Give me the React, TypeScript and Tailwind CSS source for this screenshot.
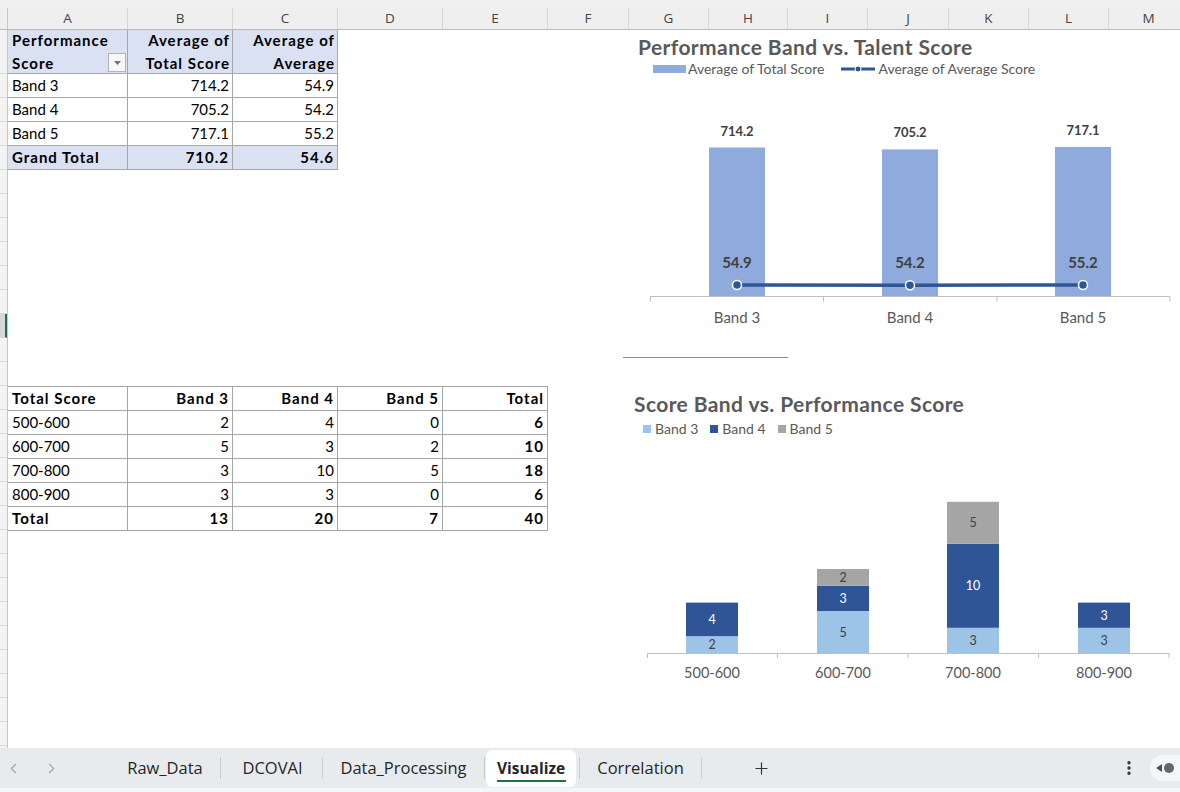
import { ChevronLeft, ChevronRight, Plus, EllipsisVertical } from "lucide-react";

const COLUMNS = [
  { l: "A", w: "w-[120px]" },
  { l: "B", w: "w-[105px]" },
  { l: "C", w: "w-[105px]" },
  { l: "D", w: "w-[105px]" },
  { l: "E", w: "w-[105px]" },
  { l: "F", w: "w-[81px]" },
  { l: "G", w: "w-[80px]" },
  { l: "H", w: "w-[79px]" },
  { l: "I", w: "w-[80px]" },
  { l: "J", w: "w-[81px]" },
  { l: "K", w: "w-[80px]" },
  { l: "L", w: "w-[80px]" },
  { l: "M", w: "w-[80px]" },
];

const PIVOT_ROWS = [
  ["Band 3", "714.2", "54.9"],
  ["Band 4", "705.2", "54.2"],
  ["Band 5", "717.1", "55.2"],
];

const COUNT_ROWS = [
  ["500-600", "2", "4", "0", "6"],
  ["600-700", "5", "3", "2", "10"],
  ["700-800", "3", "10", "5", "18"],
  ["800-900", "3", "3", "0", "6"],
];

// chart 1: avg total score bars + avg score line, same axis
const BAND_CHART = [
  { name: "Band 3", total: 714.2, avg: 54.9, x: 117 },
  { name: "Band 4", total: 705.2, avg: 54.2, x: 290 },
  { name: "Band 5", total: 717.1, avg: 55.2, x: 463 },
];
const K1 = 0.2086;
const AXIS1 = 196.5;

// chart 2: stacked counts
const STACKS = [
  { name: "500-600", x: 72, v: [2, 4, 0] },
  { name: "600-700", x: 203, v: [5, 3, 2] },
  { name: "700-800", x: 333, v: [3, 10, 5] },
  { name: "800-900", x: 464, v: [3, 3, 0] },
];
const K2 = 8.4;
const AXIS2 = 163;
const STACK_FILL = ["#9dc3e6", "#2f5597", "#a5a5a5"];
const STACK_TEXT = ["#404040", "#ffffff", "#404040"];

const ROW_LINES = Array.from({ length: 29 }, (_, i) => i);

function Cell({
  w,
  right,
  bold,
  children,
}: {
  w: string;
  right?: boolean;
  bold?: boolean;
  children: React.ReactNode;
}) {
  return (
    <div
      className={`${w} h-[24px] shrink-0 flex items-center border-r border-b border-[#a6a6a6] px-[4px] pr-[3px] ${
        right ? "justify-end" : ""
      } ${bold ? "font-bold tracking-[1px]" : ""}`}
    >
      {children}
    </div>
  );
}

function PivotTable() {
  return (
    <div className="flex flex-col text-[15px] text-black">
      <div className="flex bg-[#d9e1f2] font-bold tracking-[1px] leading-[23px]">
        <div className="relative w-[120px] h-[44px] flex flex-col justify-center border-r border-b border-[#a6a6a6] px-[4px]">
          <span>Performance</span>
          <span>Score</span>
          <div className="absolute right-[1px] top-[23px] w-[18px] h-[19px] bg-[#f7f7f7] border border-[#b4b4b4] flex items-center justify-center">
            <svg width="7" height="4" viewBox="0 0 7 4">
              <path d="M0 0 L7 0 L3.5 4 Z" fill="#707070" />
            </svg>
          </div>
        </div>
        <div className="w-[105px] h-[44px] flex flex-col justify-center items-end border-r border-b border-[#a6a6a6] pr-[2px]">
          <span>Average of</span>
          <span>Total Score</span>
        </div>
        <div className="w-[105px] h-[44px] flex flex-col justify-center items-end border-r border-b border-[#a6a6a6] pr-[2px]">
          <span>Average of</span>
          <span>Average</span>
        </div>
      </div>
      {PIVOT_ROWS.map((r) => (
        <div key={r[0]} className="flex">
          <Cell w="w-[120px]">{r[0]}</Cell>
          <Cell w="w-[105px]" right>
            {r[1]}
          </Cell>
          <Cell w="w-[105px]" right>
            {r[2]}
          </Cell>
        </div>
      ))}
      <div className="flex bg-[#d9e1f2]">
        <Cell w="w-[120px]" bold>
          Grand Total
        </Cell>
        <Cell w="w-[105px]" right bold>
          710.2
        </Cell>
        <Cell w="w-[105px]" right bold>
          54.6
        </Cell>
      </div>
    </div>
  );
}

function CountTable() {
  return (
    <div className="mt-[216px] flex flex-col border-t border-[#a6a6a6] text-[15px] text-black">
      <div className="flex">
        <Cell w="w-[120px]" bold>
          Total Score
        </Cell>
        {["Band 3", "Band 4", "Band 5", "Total"].map((h) => (
          <Cell key={h} w="w-[105px]" right bold>
            {h}
          </Cell>
        ))}
      </div>
      {COUNT_ROWS.map((r) => (
        <div key={r[0]} className="flex">
          <Cell w="w-[120px]">{r[0]}</Cell>
          <Cell w="w-[105px]" right>
            {r[1]}
          </Cell>
          <Cell w="w-[105px]" right>
            {r[2]}
          </Cell>
          <Cell w="w-[105px]" right>
            {r[3]}
          </Cell>
          <Cell w="w-[105px]" right bold>
            {r[4]}
          </Cell>
        </div>
      ))}
      <div className="flex">
        <Cell w="w-[120px]" bold>
          Total
        </Cell>
        {["13", "20", "7", "40"].map((v, i) => (
          <Cell key={i} w="w-[105px]" right bold>
            {v}
          </Cell>
        ))}
      </div>
    </div>
  );
}

function BandChart() {
  const pts = BAND_CHART.map((b) => `${b.x},${AXIS1 - b.avg * K1}`).join(" ");
  return (
    <div className="absolute left-[620px] top-[34px] w-[560px] h-[310px] font-['Lato'] text-[#595959]">
      <div className="pl-[18px] text-[21px] tracking-[0.4px] font-bold leading-[26px]">
        Performance Band vs. Talent Score
      </div>
      <div className="flex items-center pl-[33px] text-[14px] leading-[18px]">
        <span className="w-[33px] h-[8px] bg-[#8faadc]" />
        <span className="ml-[2px]">Average of Total Score</span>
        <svg width="34" height="8" className="ml-[16px]">
          <line x1="0" y1="4" x2="34" y2="4" stroke="#2f5597" strokeWidth="3" />
          <circle cx="17" cy="4" r="3" fill="#2f5597" stroke="#fff" strokeWidth="1" />
        </svg>
        <span className="ml-[4px]">Average of Average Score</span>
      </div>
      <svg width="560" height="240" className="absolute left-0 top-[66px]">
        {BAND_CHART.map((b) => {
          const top = AXIS1 - b.total * K1;
          return (
            <g key={b.name}>
              <rect x={b.x - 28} y={top} width="56" height={AXIS1 - top} fill="#8faadc" />
              <text x={b.x} y={top - 12} textAnchor="middle" fontSize="13" fontWeight="700" fill="#404040">
                {b.total.toFixed(1)}
              </text>
            </g>
          );
        })}
        <line x1="30" y1={AXIS1} x2="550" y2={AXIS1} stroke="#c0c0c0" strokeWidth="1" />
        {[30.5, 203.5, 377, 550].map((x) => (
          <line key={x} x1={x} y1={AXIS1} x2={x} y2={AXIS1 + 5} stroke="#c0c0c0" strokeWidth="1" />
        ))}
        <polyline points={pts} fill="none" stroke="#2f5597" strokeWidth="3.5" />
        {BAND_CHART.map((b) => (
          <g key={b.name + "p"}>
            <circle cx={b.x} cy={AXIS1 - b.avg * K1} r="4.5" fill="#2f5597" stroke="#fff" strokeWidth="1.5" />
            <text x={b.x} y={AXIS1 - 29} textAnchor="middle" fontSize="15" fontWeight="700" fill="#404040">
              {b.avg.toFixed(1)}
            </text>
            <text x={b.x} y={AXIS1 + 26} textAnchor="middle" fontSize="15" fill="#595959">
              {b.name}
            </text>
          </g>
        ))}
      </svg>
    </div>
  );
}

function StackChart() {
  return (
    <div className="absolute left-[620px] top-[391px] w-[560px] h-[300px] font-['Lato'] text-[#595959]">
      <div className="pl-[14px] text-[21px] tracking-[0.4px] font-bold leading-[26px]">
        Score Band vs. Performance Score
      </div>
      <div className="flex items-center pl-[23px] mt-[3px] text-[14px] leading-[18px]">
        {["Band 3", "Band 4", "Band 5"].map((b, i) => (
          <div key={b} className="flex items-center mr-[12px]">
            <span
              className={`w-[8px] h-[8px] ${
                i === 0 ? "bg-[#9dc3e6]" : i === 1 ? "bg-[#2f5597]" : "bg-[#a5a5a5]"
              }`}
            />
            <span className="ml-[4px]">{b}</span>
          </div>
        ))}
      </div>
      <svg width="540" height="200" className="absolute left-[20px] top-[99px]">
        {STACKS.map((s) => {
          let base = AXIS2;
          return (
            <g key={s.name}>
              {s.v.map((v, i) => {
                if (!v) return null;
                const h = v * K2;
                const y = base - h;
                base = y;
                return (
                  <g key={i}>
                    <rect x={s.x - 26} y={y} width="52" height={h} fill={STACK_FILL[i]} />
                    <text x={s.x} y={y + h / 2 + 4.5} textAnchor="middle" fontSize="12.5" fill={STACK_TEXT[i]}>
                      {v}
                    </text>
                  </g>
                );
              })}
              <text x={s.x} y={AXIS2 + 25} textAnchor="middle" fontSize="14.5" fill="#595959">
                {s.name}
              </text>
            </g>
          );
        })}
        <line x1="7" y1={AXIS2 + 0.5} x2="529" y2={AXIS2 + 0.5} stroke="#c0c0c0" />
        {[7.5, 137.5, 268, 398.5, 529].map((x) => (
          <line key={x} x1={x} y1={AXIS2} x2={x} y2={AXIS2 + 5} stroke="#c0c0c0" />
        ))}
      </svg>
    </div>
  );
}

function TabBar() {
  const sep = <span className="w-px h-[22px] bg-[#c8cbd0]" />;
  return (
    <div className="flex flex-col font-['Open_Sans'] text-[16.5px] text-[#262626]">
      <div className="h-[40px] bg-[#e8ebee] flex items-center">
        <div className="w-[110px] flex items-center text-[#a3a3a3]">
          <ChevronLeft size={17} strokeWidth={1.5} className="ml-[5px]" />
          <ChevronRight size={17} strokeWidth={1.5} className="ml-[21px]" />
        </div>
        <div className="w-[110px] text-center">Raw_Data</div>
        {sep}
        <div className="w-[101px] text-center pl-[2px]">DCOVAI</div>
        {sep}
        <div className="w-[161px] text-center">Data_Processing</div>
        {sep}
        <div className="ml-[1px] w-[90px] h-[37px] mt-[1px] bg-white rounded-[6px] flex flex-col items-center justify-center">
          <span className="font-bold text-[15.5px] leading-[20px] mt-[2px]">Visualize</span>
          <span className="w-[69px] h-[2px] bg-[#1e7145] mt-[2px]" />
        </div>
        <span className="ml-[3px]" />
        {sep}
        <div className="w-[121px] text-center">Correlation</div>
        {sep}
        <Plus size={19} strokeWidth={1.5} className="ml-[50px] text-[#333]" />
        <div className="flex-1" />
        <EllipsisVertical size={18} strokeWidth={2.5} className="text-[#333] mr-[12px]" />
        <div className="w-[30px] h-[26px] bg-[#f5f6f7] rounded-l-[13px] flex items-center pl-[6px] gap-[2px]">
          <svg width="6" height="8" viewBox="0 0 6 8">
            <path d="M6 0 L0 4 L6 8 Z" fill="#555" />
          </svg>
          <span className="w-[10px] h-[10px] rounded-full bg-[#666]" />
        </div>
      </div>
      <div className="h-[4px] bg-[#f4f5f6]" />
    </div>
  );
}

export default function App() {
  return (
    <div className="relative w-[1180px] h-[792px] overflow-hidden bg-white flex flex-col font-['Lato']">
      <div className="h-[8px] bg-[#f0f0f0]" />
      <div className="h-[22px] flex bg-[#efefef] border-b border-[#b9b9b9] font-['Open_Sans'] text-[13.5px] text-[#444]">
        <div className="w-[8px] shrink-0 border-r border-[#c6c6c6]" />
        {COLUMNS.map((c) => (
          <div
            key={c.l}
            className={`${c.w} shrink-0 flex items-center justify-center border-r border-[#d6d6d6] leading-none`}
          >
            {c.l}
          </div>
        ))}
      </div>
      <div className="flex-1 flex min-h-0">
        <div className="w-[8px] shrink-0 flex flex-col bg-[#f3f3f3] border-r border-[#c6c6c6] overflow-hidden">
          {ROW_LINES.map((i) => (
            <div
              key={i}
              className={`shrink-0 border-b border-[#d8d8d8] ${i === 0 ? "h-[44px]" : "h-[24px]"} ${
                i === 11 ? "bg-[#d6d6d6] border-r-2 border-r-[#1e7145]" : ""
              }`}
            />
          ))}
        </div>
        <div className="flex flex-col items-start">
          <PivotTable />
          <CountTable />
        </div>
      </div>
      <TabBar />

      <BandChart />
      <div className="absolute left-[623px] top-[357px] w-[165px] h-px bg-[#8c8c8c]" />
      <StackChart />
    </div>
  );
}
